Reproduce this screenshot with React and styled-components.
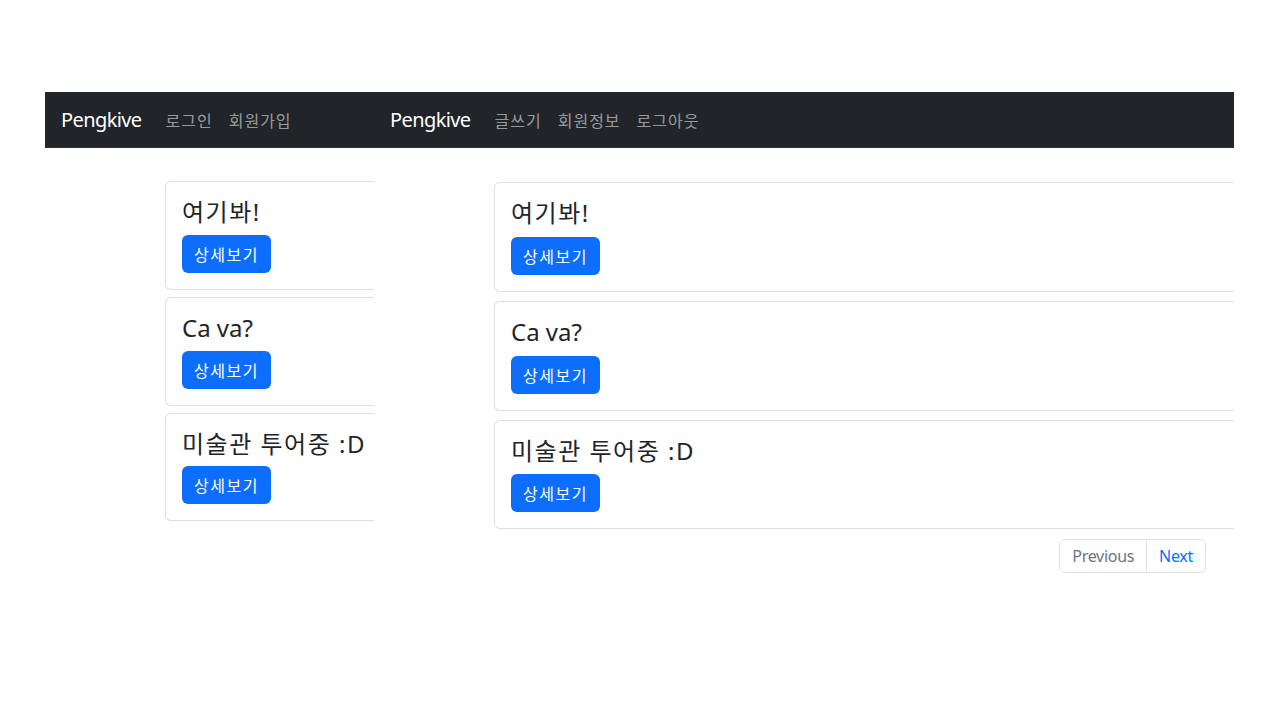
import React from 'react';
import styled, { createGlobalStyle } from 'styled-components';

const GlobalStyle = createGlobalStyle`
  body {
    margin: 0;
    background: #fff;
    font-family: "Noto Sans", "Noto Sans CJK KR", sans-serif;
  }
`;

const Stage = styled.div`
  display: flex;
  align-items: flex-start;
  padding: 92px 0 0 45px;
  height: 720px;
  box-sizing: border-box;
`;

const Shot = styled.div`
  width: ${(p) => p.width}px;
  overflow: hidden;
  flex-shrink: 0;
`;

const Navbar = styled.nav`
  height: 56px;
  background: #212529;
  border-bottom: 1px solid #2c3136;
  box-sizing: border-box;
  display: flex;
  align-items: center;
  padding: 0 16px;
`;

const Brand = styled.a`
  font-size: 20px;
  color: #fff;
  letter-spacing: -0.6px;
  margin-right: 16px;
  white-space: nowrap;
`;

const NavLink = styled.a`
  font-size: 16px;
  color: rgba(255, 255, 255, 0.55);
  padding: 0 8px;
  letter-spacing: 1px;
  white-space: nowrap;
  font-family: "Noto Sans CJK KR", sans-serif;
`;

const CardList = styled.div`
  display: flex;
  flex-direction: column;
  gap: ${(p) => (p.wide ? 9 : 7)}px;
  margin: ${(p) => (p.wide ? 34 : 33)}px 0 0 120px;
  width: 1000px;
`;

const Card = styled.div`
  border: 1px solid rgba(0, 0, 0, 0.125);
  border-radius: 6px;
  padding: 16px;
  background: #fff;
`;

const Title = styled.h5`
  margin: 0 0 ${(p) => (p.wide ? 9 : 8)}px;
  font-size: 24px;
  font-weight: 400;
  line-height: 1.2;
  letter-spacing: ${(p) => (p.hangul ? 1.5 : 0)}px;
  color: #212529;
`;

const Button = styled.button`
  background: #0d6efd;
  color: #fff;
  border: none;
  border-radius: 6px;
  padding: 0 12px;
  height: 38px;
  font-size: 16px;
  letter-spacing: 1.5px;
  font-family: "Noto Sans CJK KR", sans-serif;
`;

const PagerRow = styled.div`
  display: flex;
  justify-content: flex-end;
  padding-right: 28px;
  margin-top: 10px;
`;

const Pager = styled.ul`
  display: flex;
  list-style: none;
  margin: 0;
  padding: 0;
`;

const PageItem = styled.li`
  height: 34px;
  display: flex;
  align-items: center;
  padding: 0 12px;
  font-size: 16px;
  letter-spacing: -0.3px;
  border: 1px solid #dee2e6;
  box-sizing: border-box;
  color: ${(p) => (p.disabled ? '#6c757d' : '#0d6efd')};
  &:first-child {
    border-radius: 6px 0 0 6px;
  }
  &:last-child {
    border-radius: 0 6px 6px 0;
    margin-left: -1px;
  }
`;

const posts = ['여기봐!', 'Ca va?', '미술관 투어중 :D'];

function Posts({ wide }) {
  return (
    <CardList wide={wide}>
      {posts.map((t) => (
        <Card key={t}>
          <Title wide={wide} hangul={/[가-힣]/.test(t)}>{t}</Title>
          <Button>상세보기</Button>
        </Card>
      ))}
    </CardList>
  );
}

export default function App() {
  return (
    <>
      <GlobalStyle />
      <Stage>
        <Shot width={329}>
          <Navbar>
            <Brand>Pengkive</Brand>
            <NavLink>로그인</NavLink>
            <NavLink>회원가입</NavLink>
          </Navbar>
          <Posts />
        </Shot>
        <Shot width={860}>
          <Navbar>
            <Brand>Pengkive</Brand>
            <NavLink>글쓰기</NavLink>
            <NavLink>회원정보</NavLink>
            <NavLink>로그아웃</NavLink>
          </Navbar>
          <Posts wide />
          <PagerRow>
            <Pager>
              <PageItem disabled>Previous</PageItem>
              <PageItem>Next</PageItem>
            </Pager>
          </PagerRow>
        </Shot>
      </Stage>
    </>
  );
}
